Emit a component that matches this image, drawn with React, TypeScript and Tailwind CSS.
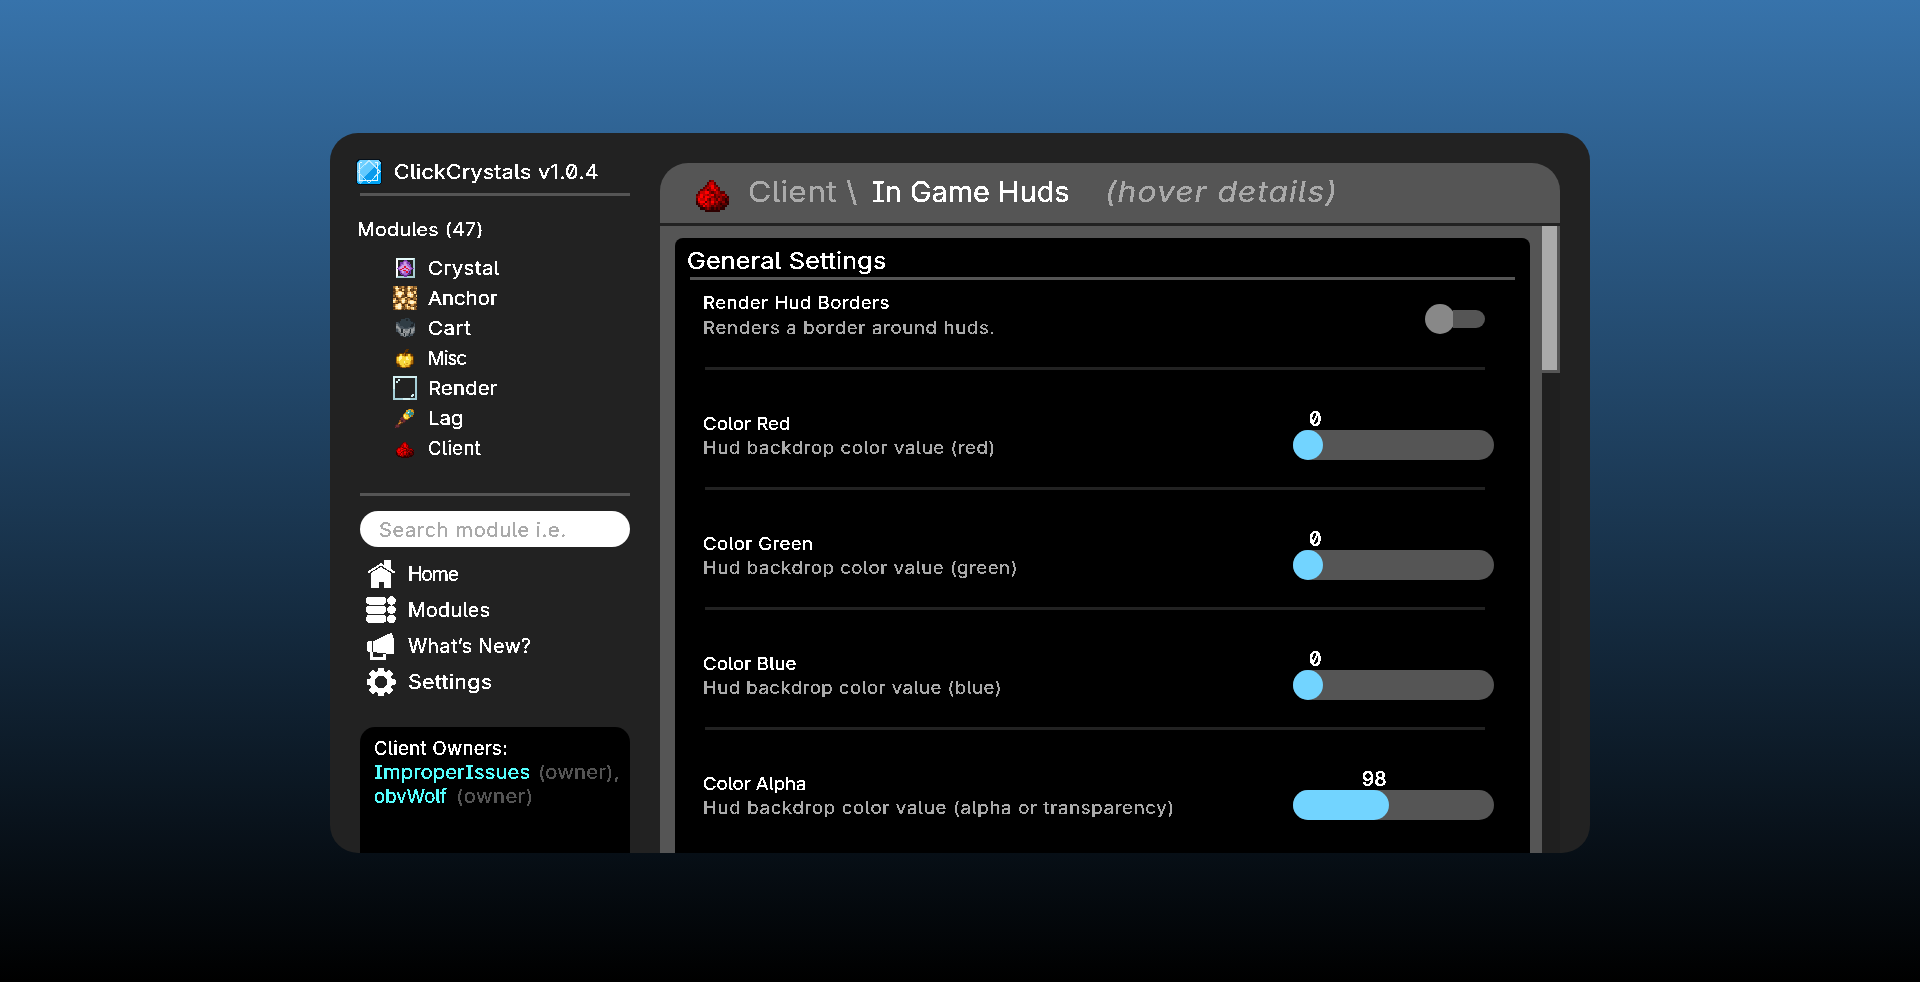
import type { ReactNode } from "react";

const TEXT = "block whitespace-nowrap [filter:url(#crisp)]";
const WIDE = "origin-left scale-x-110";

const PALETTE: Record<string, string> = {
  k: "#2e0000", r: "#5a0000", s: "#8f0000", t: "#c40000", u: "#ff0000", v: "#ff4a3a",
  a: "#4a2a12", b: "#6e4a20", c: "#95682f", d: "#d0944a", e: "#ffd88a", f: "#fff4cf",
  g: "#1f262b", h: "#303d45", i: "#455059", j: "#71787c", l: "#989c9e", m: "#20282c",
  n: "#5c3200", o: "#a86a0c", p: "#e0a020", q: "#f8d83c", w: "#fff3a0",
  x: "#ffffff", y: "#c9ecef", z: "#8dbcc6",
  A: "#4b2070", B: "#7838a8", C: "#a868d0", D: "#cf9fe6", E: "#e0102c",
  F: "#2f8a8c", G: "#58bdb4", H: "#6d2f38", I: "#4a2026", J: "#8a4a22",
};

function Pixels({ rows, className }: { rows: string[]; className: string }) {
  return (
    <svg className={className} viewBox={`0 0 ${rows[0].length} ${rows.length}`} preserveAspectRatio="none" shapeRendering="crispEdges">
      {rows.flatMap((row, y) =>
        [...row].map((c, x) => (c === "." ? null : <rect key={`${x}-${y}`} x={x} y={y} width="1.02" height="1.02" fill={PALETTE[c]} />)),
      )}
    </svg>
  );
}

const REDSTONE = [
  "......rs.......",
  ".....rttr......",
  "....rstusr.....",
  "...rstsustr....",
  "..rstrstusr....",
  ".rttuusrstsrr..",
  "rsuttsturssstr.",
  "stusuutsrsrsrsk",
  "ruttusrtsrtsrkr",
  "ktuurtsustrrskk",
  "krtsutstrsrkrrk",
  ".krustsrsrrrkk.",
  "..kkrsrkrkrkk..",
  "....kkkkkkk....",
];

const CRYSTAL = [
  "................",
  ".......BB.......",
  "......BCCB......",
  "...BBBCDCBBB....",
  "...BCCCDDCCAB...",
  "...BCDDDDCCCB...",
  "..BCDDDEDDCCB...",
  ".BCDDDDEDDDCCB..",
  "BCDDDEEDEEDDCCBB",
  ".BCEEDDDDDECCB..",
  "..BCDDEEDDCCB...",
  "...BCDDCEECAB...",
  "...BACCCCCAAB...",
  "....BBBCCBBA....",
  "......ABBA......",
  ".......BB.......",
];

const GLOWSTONE = [
  "cdeabcdbaceddbcc",
  "beffdbcabdfecbde",
  "acedbaecbceababc",
  "bbdeedbabbddbdea",
  "acefffeabdefdbeb",
  "bdffffdcaefffdab",
  "cadefdbbadefecbe",
  "abbddabcebaddbca",
  "deabcdeebcdbaccd",
  "fedbdeffdadeedab",
  "edcabdfecbefffeb",
  "abadebdbabdffedc",
  "bdeffdabdeabddba",
  "cefffecadfebcabd",
  "adeffdbbceddefca",
  "bccddbacabcadecb",
];

const CART = [
  "........hhhg....",
  ".....hhhhghhg...",
  "..gghhhhhhhhhg..",
  ".ihghhhhhhhhhhgg",
  ".iihhhhhhhhhhhgh",
  ".jiihhhhhhhhhggi",
  ".ljiiihhhhhhggii",
  ".lljiiihhhiiiijj",
  ".jlljiiiiiijjjlj",
  ".ijllmlljjllmllj",
  ".ijjlmljllljmlji",
  "..ijjmlljlljmlji",
  "...ijljmljjmjji.",
  "....ijlmljimii..",
  "......ijjmmi....",
  "........mm......",
];

const APPLE = [
  "........nn....",
  ".......nn.....",
  "......nn......",
  "..nnnnonnnnn..",
  ".noqqoonoqqon.",
  "noqwwqppqqqpon",
  "oqwwwqqqwqqqpn",
  "oqwwqqqqwwqqpn",
  "oqwqqqqqqqqqon",
  "opqqqqwqqqqpon",
  "nopqqqqqpqqpon",
  ".noqqqpqqqpon.",
  ".nnopqqpppon..",
  "...nnooonnn...",
];

const SPYGLASS = [
  "..........oppo..",
  ".........pGGFpo.",
  "........oGxGFFp.",
  ".......opGGFFFF.",
  "......oqqpFFFFo.",
  "......pwqqpFGo..",
  ".....HoqwqqpI...",
  "....HHHpqqoI....",
  "....IHHHooI.....",
  "...JJIHHI.......",
  "..aodJII........",
  "..odJa..........",
  ".IJaa...........",
  "IHHI............",
  "HII.............",
];

const CrystalIcon = () => (
  <span className="grid h-5 w-[19px] border-2 border-t-[#e6fbfb] border-r-[#a7cdd2] border-b-[#a7cdd2] border-l-white">
    <Pixels rows={CRYSTAL} className="-m-px h-[18px] w-[17px]" />
  </span>
);

const GlassIcon = () => (
  <svg className="size-6" viewBox="0 0 24 24" shapeRendering="crispEdges">
    <path d="M0 0H24V24H0ZM2 2V22H22V2Z" fill="#a5cfd8" fillRule="evenodd" />
    <path d="M0 0H24V2H2V13H0ZM10 22H17V24H10Z" fill="#d3f0f2" />
    <path d="M5 3H7V5H5V7H3V5H5ZM19 18H21V20H20V21H18V19H19Z" fill="#d3f0f2" />
  </svg>
);

const Logo = () => (
  <svg className="size-[26px]" viewBox="0 0 26 26" shapeRendering="crispEdges">
    <rect x="0" y="0" width="26" height="26" rx="4" fill="#06101a" />
    <rect x="1" y="1" width="24" height="24" rx="3.5" fill="#00a4f5" />
    <path d="M4 1H22L25 4L4 25L1 22V4Z" fill="#6fd0ff" />
    <path d="M13 3L23 13L13 23L3 13Z" fill="#62caff" />
    <path d="M21 6L23 13L13 23L6 20Z" fill="#0a9bec" />
    <path d="M3.5 3.5V21.5H21.5V3.5M3.5 3.5H6M19 3.5H21.5" fill="none" stroke="#e6f8ff" strokeWidth="1" />
    <path d="M13 1.5L24 12.5L13 24L1.5 12.5Z" fill="none" stroke="#bfeaff" strokeWidth="1" />
  </svg>
);

const HomeIcon = () => (
  <svg className="h-7 w-[30px]" viewBox="0 0 30 28" fill="#fff" shapeRendering="crispEdges">
    <path d="M18 0H25V9.5L18 5.6Z" />
    <path d="M15 3L28.5 11.3V13H27L15 5.4L3 13H2V11.3Z" />
    <path d="M15 7L25 13V28H17.7V22H13V28H5V13Z" />
  </svg>
);

const ModulesIcon = () => (
  <svg className="h-7 w-[30px]" viewBox="0 0 30 28" fill="#fff" shapeRendering="crispEdges">
    {[0.5, 9.6, 18.8].map((y) => (
      <g key={y}>
        <rect x="0" y={y} width="20.3" height="8.2" rx="4" />
        <circle cx="25.5" cy={y + 4.1} r="4.3" />
      </g>
    ))}
  </svg>
);

const MegaphoneIcon = () => (
  <svg className="h-7 w-[30px]" viewBox="0 0 30 28" fill="#fff" shapeRendering="crispEdges">
    <path d="M2 9.3H6V20H2L1 18V11Z" />
    <path d="M7 9.3L24 1.3H26L28 8V22H24L7 20Z" />
    <path d="M4 20H6.7V24.7H17V22H20V27.5H4Z" />
  </svg>
);

const GearIcon = () => (
  <svg className="h-7 w-[30px]" viewBox="-15 -14 30 28" shapeRendering="crispEdges">
    <g fill="#fff">
      {[0, 45, 90, 135].map((r) => (
        <rect key={r} x="-3" y="-14.5" width="6" height="29" rx="1" transform={`rotate(${r})`} />
      ))}
      <circle r="11.3" />
    </g>
    <circle r="6.2" fill="#222" />
  </svg>
);

const modules = [
  { name: "Crystal", text: `${WIDE} tracking-[0.4px]`, icon: <CrystalIcon /> },
  { name: "Anchor", text: WIDE, icon: <Pixels rows={GLOWSTONE} className="size-6" /> },
  { name: "Cart", text: `${WIDE} tracking-[0.6px]`, icon: <Pixels rows={CART} className="size-5" /> },
  { name: "Misc", text: "tracking-[-0.8px]", icon: <Pixels rows={APPLE} className="h-[19px] w-[18px]" /> },
  { name: "Render", text: `${WIDE} tracking-[0.15px]`, icon: <GlassIcon /> },
  { name: "Lag", text: WIDE, icon: <Pixels rows={SPYGLASS} className="h-[19px] w-5" /> },
  { name: "Client", text: "tracking-[0.4px]", icon: <Pixels rows={REDSTONE} className="mt-1 h-4 w-[18px]" /> },
];

const nav = [
  { name: "Home", text: "tracking-[-1.2px]", icon: <HomeIcon /> },
  { name: "Modules", text: "tracking-[0.4px]", icon: <ModulesIcon /> },
  { name: "What’s New?", text: "tracking-[0.4px]", icon: <MegaphoneIcon /> },
  { name: "Settings", text: `${WIDE} tracking-[0.24px]`, icon: <GearIcon /> },
];

const sliders = [
  { title: "Color Red", t: "", desc: "Hud backdrop color value (red)", d: "tracking-[0.49px]", value: "0", pad: "pl-[16px]", fill: "w-[30px]" },
  { title: "Color Green", t: "tracking-[0.29px]", desc: "Hud backdrop color value (green)", d: "tracking-[0.47px]", value: "0", pad: "pl-[16px]", fill: "w-[30px]" },
  { title: "Color Blue", t: "tracking-[0.09px]", desc: "Hud backdrop color value (blue)", d: "tracking-[0.38px]", value: "0", pad: "pl-[16px]", fill: "w-[30px]" },
  { title: "Color Alpha", t: "tracking-[-0.07px]", desc: "Hud backdrop color value (alpha or transparency)", d: "tracking-[0.58px]", value: "98", pad: "pl-[69px]", fill: "w-[96px]" },
];

function Label({ className, children }: { className: string; children: ReactNode }) {
  return <span className={`${TEXT} ${className}`}>{children}</span>;
}

function Sidebar() {
  return (
    <aside className="flex w-[330px] shrink-0 flex-col pt-[26px] pr-[30px]">
      <div className="flex h-[26px] items-center gap-3 pl-[26px]">
        <Logo />
        <Label className={`${WIDE} text-[19.5px] leading-[26px] tracking-[0.21px]`}>ClickCrystals v1.0.4</Label>
      </div>
      <div className="mt-2 ml-[30px] h-[3px] shrink-0 bg-[#555]" />
      <Label className={`${WIDE} mt-[21px] ml-[27px] text-[18px] leading-[25px] tracking-[0.15px]`}>Modules (47)</Label>
      <ul className="mt-[11px] pl-[63px]">
        {modules.map((m) => (
          <li key={m.name} className="flex h-[30px] items-center">
            <span className="flex w-6 justify-center">{m.icon}</span>
            <Label className={`ml-[11px] text-[18.5px] leading-[30px] ${m.text}`}>{m.name}</Label>
          </li>
        ))}
      </ul>
      <div className="mt-[30px] ml-[30px] h-[3px] shrink-0 bg-[#555]" />
      <div className="mt-[15px] ml-[30px] h-9 shrink-0 rounded-full bg-white pt-[2px] pl-[19px]">
        <Label className="text-[20px] leading-[35px] tracking-[0.64px] text-[#aaa]">Search module i.e.</Label>
      </div>
      <nav className="mt-[9px] pl-9">
        {nav.map((n) => (
          <div key={n.name} className="flex h-9 items-center gap-3">
            {n.icon}
            <Label className={`text-[19.5px] leading-9 ${n.text}`}>{n.name}</Label>
          </div>
        ))}
      </nav>
      <div className="mt-[27px] ml-[30px] flex-1 rounded-t-[15px] bg-black pt-[9px] pl-[14px] text-[18.5px] leading-6">
        <Label className="tracking-[0.34px]">Client Owners:</Label>
        <div className="flex">
          <div className="w-[164px] shrink-0">
            <Label className={`${WIDE} w-fit text-[#5ff]`}>ImproperIssues</Label>
          </div>
          <Label className={`${WIDE} tracking-[0.13px] text-[#555]`}>(owner),</Label>
        </div>
        <div className="flex">
          <div className="w-[82px] shrink-0">
            <Label className="w-fit tracking-[0.1px] text-[#5ff]">obvWolf</Label>
          </div>
          <Label className={`${WIDE} tracking-[0.4px] text-[#555]`}>(owner)</Label>
        </div>
      </div>
    </aside>
  );
}

export default function App() {
  return (
    <div className="flex h-[982px] w-[1920px] justify-center overflow-hidden bg-linear-to-b/srgb from-[#3773ab] to-black pt-[133px] font-['Inter',sans-serif] text-white [font-feature-settings:'zero','cv05','cv08']">
      <svg className="absolute size-0">
        <filter id="crisp" x="-5%" y="-5%" width="110%" height="110%" colorInterpolationFilters="sRGB">
          <feComponentTransfer>
            <feFuncA type="discrete" tableValues="0 1 1" />
          </feComponentTransfer>
        </filter>
      </svg>
      <div className="flex h-[720px] w-[1260px] overflow-hidden rounded-[28px] bg-[#222]">
        <Sidebar />
        <main className="flex w-[900px] flex-col pt-[30px]">
          <header className="flex h-[60px] shrink-0 rounded-t-[28px] bg-[#555] pl-9 text-[29px] leading-[57px]">
            <Pixels rows={REDSTONE} className="mt-[17px] h-8 w-[33px]" />
            <div className="ml-[19px] w-[124px]">
              <Label className={`${WIDE} w-fit tracking-[0.17px] text-[#aaa]`}>Client \</Label>
            </div>
            <Label className="w-[233px] tracking-[-0.05px]">In Game Huds</Label>
            <Label className={`${WIDE} tracking-[0.88px] text-[#aaa] italic`}>(hover details)</Label>
          </header>
          <div className="mt-[3px] flex flex-1">
            <div className="flex w-[882px] bg-[#555] pt-3 pr-3 pl-[15px]">
              <section className="flex w-[855px] flex-col rounded-t-[8px] bg-black">
                <Label className={`${WIDE} mt-[8px] ml-[12px] w-fit text-[23px] leading-[30px] tracking-[0.08px]`}>General Settings</Label>
                <div className="mt-px mr-[15px] ml-[15px] h-[3px] bg-[#555]" />
                <div className="mr-[45px] ml-[30px] flex h-[90px] shrink-0 justify-between border-b-[3px] border-[#222]">
                  <div className="-ml-[2px] pt-[11px] text-[17px] leading-[25px]">
                    <Label className={`${WIDE} tracking-[0.37px]`}>Render Hud Borders</Label>
                    <Label className={`${WIDE} tracking-[0.58px] text-[#aaa]`}>Renders a border around huds.</Label>
                  </div>
                  <div className="mt-6 flex h-[30px] items-center">
                    <div className="size-[30px] rounded-full bg-[#888]" />
                    <div className="-ml-[9px] h-[18px] w-[39px] rounded-r-full bg-[#555] [clip-path:inset(0_0_0_7px)]" />
                  </div>
                </div>
                {sliders.map((s) => (
                  <div key={s.title} className="mr-[45px] ml-[30px] flex h-[120px] shrink-0 justify-between border-b-[3px] border-[#222] last:border-0">
                    <div className="-ml-[2px] pt-[42px] text-[17px] leading-6">
                      <Label className={`${WIDE} ${s.t}`}>{s.title}</Label>
                      <Label className={`${WIDE} text-[#aaa] ${s.d}`}>{s.desc}</Label>
                    </div>
                    <div className="-mr-[9px] w-[201px] pt-[38px]">
                      <Label className={`text-[19.5px] leading-[22px] font-medium ${s.pad}`}>{s.value}</Label>
                      <div className="h-[30px] rounded-full bg-[#555]">
                        <div className={`h-full rounded-full bg-[#72d4ff] ${s.fill}`} />
                      </div>
                    </div>
                  </div>
                ))}
              </section>
            </div>
            <div className="w-[18px] bg-[#1f1f1f]">
              <div className="h-[147px] border-r-[3px] border-b-[3px] border-[#555] bg-[#aaa]" />
            </div>
          </div>
        </main>
      </div>
    </div>
  );
}
